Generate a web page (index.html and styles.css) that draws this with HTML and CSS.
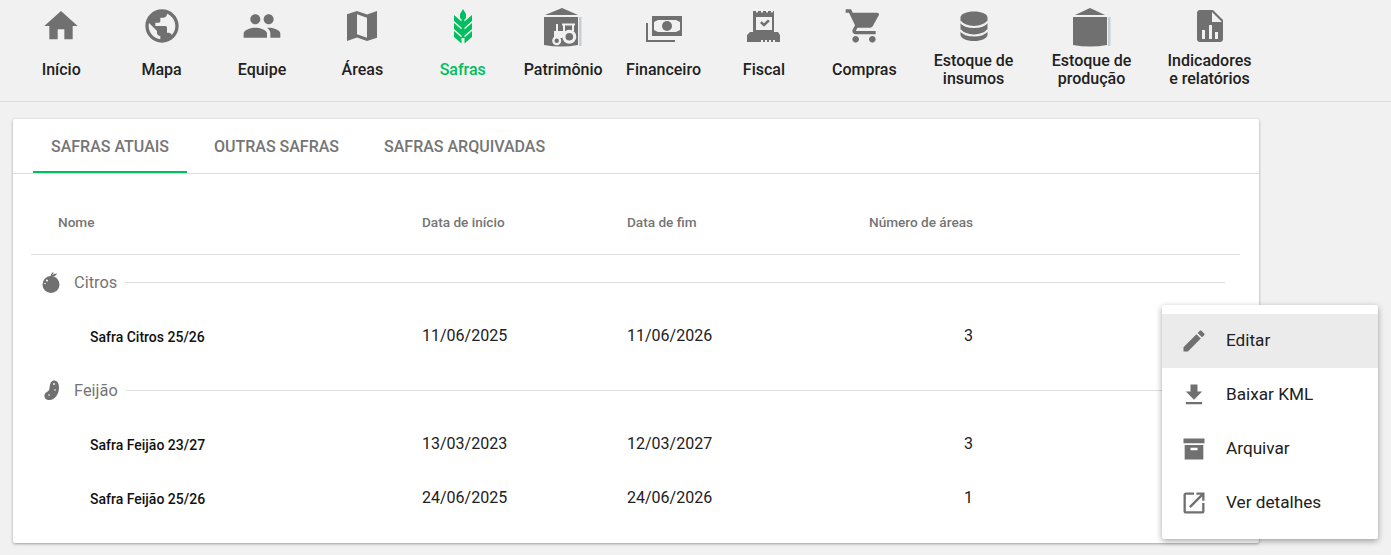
FILE: index.html
```html
<!DOCTYPE html>
<html lang="en">
<head>
    <meta charset="UTF-8">
    <meta name="viewport" content="width=device-width, initial-scale=1.0">
    <title>Safras</title>
    <link rel="stylesheet" href="styles.css">
</head>
<body>
    <nav class="top-nav">
        <a class="nav-item">
            <svg class="nav-icon" viewBox="0 0 24 24"><path d="M10 20v-6h4v6h5v-8h3L12 3 2 12h3v8z"/></svg>
            <span class="nav-label">Início</span>
        </a>
        <a class="nav-item">
            <svg class="nav-icon" viewBox="0 0 24 24"><path d="M12 2C6.48 2 2 6.48 2 12s4.48 10 10 10 10-4.48 10-10S17.52 2 12 2zm-1 17.93c-3.95-.49-7-3.85-7-7.93 0-.62.08-1.21.21-1.79L9 15v1c0 1.1.9 2 2 2v1.93zm6.9-2.54c-.26-.81-1-1.39-1.9-1.39h-1v-3c0-.55-.45-1-1-1H8v-2h2c.55 0 1-.45 1-1V7h2c1.1 0 2-.9 2-2v-.41c2.93 1.19 5 4.06 5 7.41 0 2.08-.8 3.97-2.1 5.39z"/></svg>
            <span class="nav-label">Mapa</span>
        </a>
        <a class="nav-item">
            <svg class="nav-icon" viewBox="0 0 24 24"><path d="M16 11c1.66 0 2.99-1.34 2.99-3S17.66 5 16 5c-1.66 0-3 1.34-3 3s1.34 3 3 3zm-8 0c1.66 0 2.99-1.34 2.99-3S9.66 5 8 5C6.34 5 5 6.34 5 8s1.34 3 3 3zm0 2c-2.33 0-7 1.17-7 3.5V19h14v-2.5c0-2.33-4.67-3.5-7-3.5zm8 0c-.29 0-.62.02-.97.05 1.16.84 1.97 1.97 1.97 3.45V19h6v-2.5c0-2.33-4.67-3.5-7-3.5z"/></svg>
            <span class="nav-label">Equipe</span>
        </a>
        <a class="nav-item">
            <svg class="nav-icon" viewBox="0 0 24 24"><path d="M21 3l-6 2.1L9 3 3 5v16l6-2.1 6 2.1 6-2zM15 19l-6-2.1V5l6 2.1z"/></svg>
            <span class="nav-label">Áreas</span>
        </a>
        <a class="nav-item active">
            <svg class="nav-icon" viewBox="0 0 40 40"><path d="M20 3l3 5v4l-3 3-3-3V8zM11 9l7.500 6.500v6L11 15zM29 9l-7.500 6.500v6L29 15zM11 17l7.500 6.500v6L11 23zM29 17l-7.500 6.500v6L29 23zM11 25l7.500 6.500v6.500h3v-6.500L29 25v6l-7.500 6.500V38h-3v-.5L11 31zM18.500 14h3v18h-3z"/></svg>
            <span class="nav-label">Safras</span>
        </a>
        <a class="nav-item">
            <svg class="nav-icon" viewBox="0 0 40 40">
                <path d="M2 9L19 2l16 7z"/>
                <path d="M1 11h34v28q-17 3-34 0z"/>
                <path class="gauge" d="M36 11h2.500v29H36z"/>
                <g class="cutout">
                    <circle cx="26.300" cy="30.700" r="7"/>
                    <circle cx="13.700" cy="34.700" r="4.500"/>
                    <path d="M11 25h2v-7h2v7h5v-5.500h-1v-2h13v2h-1V25h-2v-5.500h-7V26l1 2-4 4h-8z"/>
                </g>
                <circle cx="26.300" cy="30.700" r="3.800"/>
                <circle cx="13.700" cy="34.700" r="2.200"/>
            </svg>
            <span class="nav-label">Patrimônio</span>
        </a>
        <a class="nav-item">
            <svg class="nav-icon" viewBox="0 0 40 40">
                <path d="M2 17h2v17h27v2H2z"/>
                <path d="M8 10h30v20H8z"/>
                <path class="cutout" d="M14 14h18l4 2v8l-4 2H14l-4-2v-8z"/>
                <circle cx="23" cy="20" r="5"/>
            </svg>
            <span class="nav-label">Financeiro</span>
        </a>
        <a class="nav-item">
            <svg class="nav-icon" viewBox="0 0 40 40">
                <path d="M9 5h3v1.500h2V5h3v1.500h2V5h3v1.500h2V5h3v1.500h2V5h1v21h4l2 3v7h-5v-2h-2v2h-2v-2h-2v2h-2v-2h-2v2h-2v-2h-2v2H3v-7l3-3h3z"/>
                <path class="cutout" d="M12 11h16v13H12z"/>
                <path d="M16 17l1.800-1.800 2.200 2 4-3.700 1.800 1.700-5.800 5.500z"/>
            </svg>
            <span class="nav-label">Fiscal</span>
        </a>
        <a class="nav-item">
            <svg class="nav-icon" viewBox="0 0 24 24"><path d="M7 18c-1.100 0-1.990.9-1.990 2S5.900 22 7 22s2-.9 2-2-.9-2-2-2zM1 2v2h2l3.600 7.590-1.350 2.450c-.16.28-.25.61-.25.96 0 1.100.9 2 2 2h12v-2H7.420c-.14 0-.25-.11-.25-.25l.03-.12.9-1.630h7.450c.75 0 1.410-.41 1.750-1.030l3.580-6.490c.08-.14.12-.31.12-.48 0-.55-.45-1-1-1H5.210l-.94-2H1zm16 16c-1.100 0-1.990.9-1.990 2s.89 2 1.990 2 2-.9 2-2-.9-2-2-2z"/></svg>
            <span class="nav-label">Compras</span>
        </a>
        <a class="nav-item nav-item-wide">
            <svg class="nav-icon" viewBox="0 0 40 40">
                <path d="M6.500 11.500C6.500 8 12.500 5.500 20 5.500S33.500 8 33.500 11.500v17c0 4-6 6.500-13.500 6.500S6.500 32.500 6.500 28.500z"/>
                <path class="cut-line" d="M6 15.500c3 3.500 8 5.500 14 5.500s11-2 14-5.500M6 24c3 3.500 8 5.500 14 5.500S31 27.500 34 24"/>
            </svg>
            <span class="nav-label">Estoque de<br>insumos</span>
        </a>
        <a class="nav-item nav-item-wide">
            <svg class="nav-icon" viewBox="0 0 40 40">
                <path d="M3 9L18 2l15 7z"/>
                <path d="M1 11h34v28q-17 3-34 0z"/>
                <path class="gauge" d="M36 11h2.500v29H36z"/>
            </svg>
            <span class="nav-label">Estoque de<br>produção</span>
        </a>
        <a class="nav-item nav-item-wide">
            <svg class="nav-icon" viewBox="0 0 40 40">
                <path d="M10 4h13l10 10v19c0 1.700-1.300 3-3 3H10c-1.700 0-3-1.300-3-3V7c0-1.700 1.300-3 3-3z"/>
                <path class="cutout" d="M22 6l10 10H22zM12 24h3v9h-3zM19 19h3v14h-3zM25 26h3v7h-3z"/>
            </svg>
            <span class="nav-label">Indicadores<br>e relatórios</span>
        </a>
    </nav>

    <main class="card">
        <div class="tabs">
            <div class="tab selected">SAFRAS ATUAIS</div>
            <div class="tab">OUTRAS SAFRAS</div>
            <div class="tab">SAFRAS ARQUIVADAS</div>
        </div>

        <div class="crop-table">
            <div class="table-row table-head">
                <div class="col-name">Nome</div>
                <div>Data de início</div>
                <div>Data de fim</div>
                <div class="col-num">Número de áreas</div>
            </div>

            <div class="group">
                <svg class="group-icon" viewBox="0 0 24 24">
                    <circle cx="12" cy="14.500" r="8.500"/>
                    <path d="M11.500 6.500c.2-1.500.8-3 2.300-4.300l1 .8c-.8.7-1.300 1.300-1.700 2.200 1.300-.9 3-1.500 5-1.700-.8 1.800-2.600 3-5 3.200l-.7.4z"/>
                    <circle class="speck" cx="8" cy="10.500" r="1"/>
                    <circle class="speck" cx="6" cy="13.500" r=".7"/>
                </svg>
                <span class="group-title">Citros</span>
                <span class="group-line"></span>
            </div>
            <div class="table-row">
                <div class="col-name crop-name">Safra Citros 25/26</div>
                <div>11/06/2025</div>
                <div>11/06/2026</div>
                <div class="col-num">3</div>
            </div>

            <div class="group">
                <svg class="group-icon" viewBox="0 0 24 24">
                    <path d="M14.500 2.500c3.500-.5 5.500 2.500 5.500 7 0 6.500-4 12.500-9.500 12.500-3.500 0-5.500-2-5-5 .5-2.800 3.500-3 4.500-5 1-2.200.3-9 4.500-9.500z"/>
                    <circle class="speck" cx="15" cy="6" r=".9"/>
                    <circle class="speck" cx="16" cy="12" r=".8"/>
                    <circle class="speck" cx="10" cy="17" r=".8"/>
                </svg>
                <span class="group-title">Feijão</span>
                <span class="group-line"></span>
            </div>
            <div class="table-row">
                <div class="col-name crop-name">Safra Feijão 23/27</div>
                <div>13/03/2023</div>
                <div>12/03/2027</div>
                <div class="col-num">3</div>
            </div>
            <div class="table-row">
                <div class="col-name crop-name">Safra Feijão 25/26</div>
                <div>24/06/2025</div>
                <div>24/06/2026</div>
                <div class="col-num">1</div>
            </div>
        </div>
    </main>

    <ul class="row-menu">
        <li class="menu-item hover">
            <svg class="menu-icon" viewBox="0 0 24 24"><path d="M3 17.250V21h3.750L17.810 9.940l-3.750-3.750L3 17.250zM20.710 7.040c.39-.39.39-1.020 0-1.410l-2.340-2.340c-.39-.39-1.020-.39-1.410 0l-1.830 1.830 3.750 3.750 1.830-1.830z"/></svg>
            <span>Editar</span>
        </li>
        <li class="menu-item">
            <svg class="menu-icon" viewBox="0 0 24 24"><path d="M19 9h-4V3H9v6H5l7 7 7-7zM5 18v2h14v-2H5z"/></svg>
            <span>Baixar KML</span>
        </li>
        <li class="menu-item">
            <svg class="menu-icon" viewBox="0 0 24 24"><path d="M3 3h18v4H3zM4 8.500h16V21H4zM9 11v2h6v-2z" fill-rule="evenodd"/></svg>
            <span>Arquivar</span>
        </li>
        <li class="menu-item">
            <svg class="menu-icon" viewBox="0 0 24 24"><path d="M19 19H5V5h7V3H5c-1.110 0-2 .9-2 2v14c0 1.100.89 2 2 2h14c1.100 0 2-.9 2-2v-7h-2v7zM14 3v2h3.590l-9.830 9.830 1.410 1.410L19 6.410V10h2V3h-7z"/></svg>
            <span>Ver detalhes</span>
        </li>
    </ul>
</body>
</html>
```

FILE: styles.css
```css
* {
    box-sizing: border-box;
}
html, body {
    height: 555px;
    overflow: hidden;
}
body {
    margin: 0;
    background-color: #f1f1f1;
    font-family: Roboto, "Liberation Sans", sans-serif;
    color: #212121;
}

/* top navigation */
.top-nav {
    display: flex;
    height: 102px;
    padding-left: 11px;
    border-bottom: 1px solid #dcdcdc;
}
.nav-item {
    display: flex;
    flex-direction: column;
    align-items: center;
    width: 100.4px;
    padding-top: 6px;
}
.nav-item-wide {
    width: 118px;
}
.nav-icon {
    width: 40px;
    height: 40px;
    flex: none;
    fill: #707070;
    overflow: visible;
}
.nav-icon .cutout {
    fill: #f1f1f1;
}
.nav-icon .gauge {
    fill: #c9ced3;
}
.nav-icon .cut-line {
    fill: none;
    stroke: #f1f1f1;
    stroke-width: 2;
}
.nav-label {
    display: flex;
    align-items: center;
    height: 48px;
    font-size: 16px;
    font-weight: 500;
    line-height: 18px;
    text-align: center;
    color: #212121;
}
.nav-item.active .nav-icon {
    fill: #00bf5f;
}
.nav-item.active .nav-label {
    color: #00bf5f;
}

/* card with tabs */
.card {
    width: 1246px;
    height: 424px;
    margin: 17px 0 0 13px;
    background-color: #fff;
    border-radius: 2px;
    box-shadow: 0 1px 3px rgba(0, 0, 0, 0.35);
}
.tabs {
    display: flex;
    gap: 9px;
    height: 55px;
    padding-left: 20px;
    border-bottom: 1px solid #e0e0e0;
}
.tab {
    height: 54px;
    padding: 0 18px;
    font-size: 16px;
    font-weight: 500;
    line-height: 56px;
    color: #757575;
}
.tab.selected {
    border-bottom: 2px solid #00bf5f;
}

/* table */
.crop-table {
    padding: 0 19px 0 18px;
}
.table-row {
    display: grid;
    grid-template-columns: 391px 205px 205px 141px;
    align-items: center;
    height: 54px;
    padding-bottom: 2px;
    font-size: 16px;
}
.table-head {
    height: 81px;
    padding: 16px 0 0;
    border-bottom: 1px solid #e0e0e0;
    font-size: 13.600px;
    font-weight: 500;
    color: #757575;
}
.col-name {
    padding-left: 27px;
}
.col-num {
    text-align: right;
}
.crop-name {
    padding-left: 59px;
    padding-top: 3px;
    font-size: 14px;
    font-weight: 500;
    color: #111;
}
.group {
    display: flex;
    align-items: center;
    height: 54px;
    padding: 0 15px 0 8px;
}
.group-icon {
    width: 24px;
    height: 24px;
    fill: #707070;
}
.group-icon .speck {
    fill: #fff;
}
.group-title {
    margin: 0 8px 0 11px;
    font-size: 16.400px;
    color: #757575;
}
.group-line {
    flex: 1;
    height: 1px;
    background-color: #e0e0e0;
}

/* context menu over the table */
.row-menu {
    position: absolute;
    top: 305px;
    left: 1162px;
    width: 216px;
    margin: 0;
    padding: 9px 0;
    list-style: none;
    background-color: #fff;
    border-radius: 2px;
    box-shadow: 0 2px 6px rgba(0, 0, 0, 0.35);
}
.menu-item {
    display: flex;
    align-items: center;
    gap: 18px;
    height: 54px;
    padding-left: 18px;
    font-size: 17.200px;
    color: #212121;
}
.menu-item span {
    margin-top: -2px;
}
.menu-item.hover {
    background-color: #ebebeb;
}
.menu-icon {
    width: 28px;
    height: 28px;
    fill: #707070;
}
```
